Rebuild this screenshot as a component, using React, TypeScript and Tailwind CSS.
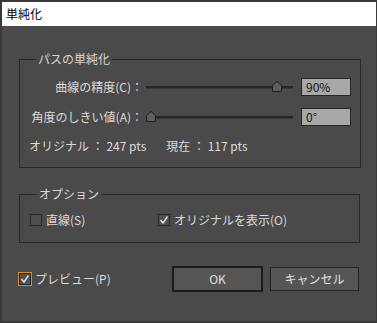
import React from "react";

const FONT = { fontFamily: '"Noto Sans CJK JP", "Noto Sans", sans-serif' };

function Thumb() {
  return (
    <svg width="10" height="11" viewBox="0 0 10 11" className="block">
      <polygon points="0.5,4.5 5,0.5 9.5,4.5 9.5,10.5 0.5,10.5" fill="#5e5e5e" stroke="#1f1f1f" strokeWidth="1" />
    </svg>
  );
}

function Slider({ pos }: { pos: number }) {
  return (
    <div className="relative h-[18px] flex items-center">
      <div className="w-full h-[3px] bg-[#262626] border-b border-[#3a3a3a]" />
      <div className="absolute top-[3px]" style={{ left: pos }}>
        <Thumb />
      </div>
    </div>
  );
}

function Check({ checked, orange }: { checked?: boolean; orange?: boolean }) {
  return (
    <div
      className={
        orange
          ? "w-[14px] h-[14px] border border-[#e38a2c] flex items-center justify-center"
          : "w-[12px] h-[12px] border border-[#262626] bg-[#505050] flex items-center justify-center"
      }
    >
      {orange ? (
        <div className="w-[12px] h-[12px] border border-[#262626] bg-[#505050] flex items-center justify-center">
          <svg width="10" height="10" viewBox="0 0 10 10">
            <polyline points="1.5,5 4,8 8.5,1.5" fill="none" stroke="#e6e6e6" strokeWidth="1.4" />
          </svg>
        </div>
      ) : checked ? (
        <svg width="10" height="10" viewBox="0 0 10 10">
          <polyline points="1.5,5 4,8 8.5,1.5" fill="none" stroke="#e6e6e6" strokeWidth="1.4" />
        </svg>
      ) : null}
    </div>
  );
}

export default function App() {
  return (
    <div
      className="w-[377px] h-[323px] bg-[#3a3a3a] pt-[2px] pl-[2px] pr-[1px] pb-[2px] flex flex-col text-[12px] text-[#dadada]"
      style={FONT}
    >
      <div className="h-[24px] bg-white flex items-center pl-[4px] text-black text-[12px] leading-[16px]">単純化</div>
      <div className="flex-1 bg-[#4a4a4a] pl-[17px] pr-[16px] pt-[25px] flex flex-col">
        <fieldset className="border border-[#2a2a2a] pl-[9px] pr-[9px] pt-[11px] pb-[13px]">
          <legend className="ml-[7px] px-[2px] leading-[16px] text-[12px]">パスの単純化</legend>
          <div className="grid grid-cols-[117px_147px_58px] gap-y-[12px] items-center">
            <div className="text-right leading-[16px] whitespace-nowrap pr-[3px]">曲線の精度(C)：</div>
            <Slider pos={126} />
            <div className="ml-[8px] w-[50px] h-[18px] bg-[#a8a8a8] border border-[#262626] text-[#111] pl-[4px] leading-[16px] text-[12px]">90%</div>
            <div className="text-right leading-[16px] whitespace-nowrap pr-[3px]">角度のしきい値(A)：</div>
            <Slider pos={0} />
            <div className="ml-[8px] w-[50px] h-[18px] bg-[#a8a8a8] border border-[#262626] text-[#111] pl-[4px] leading-[16px] text-[12px]">0°</div>
          </div>
          <div className="flex leading-[16px] mt-[12px] whitespace-pre">
            <span>オリジナル ： 247 pts</span>
            <span className="ml-[20px]">現在 ： 117 pts</span>
          </div>
        </fieldset>
        <fieldset className="mt-[18px] border border-[#2a2a2a] pl-[10px] pt-[10px] pb-[14px]">
          <legend className="ml-[7px] px-[2px] leading-[16px] text-[12px]">オプション</legend>
          <div className="flex items-center">
            <div className="flex items-center gap-[4px] w-[128px]">
              <Check />
              <span className="leading-[16px]">直線(S)</span>
            </div>
            <div className="flex items-center gap-[4px]">
              <Check checked />
              <span className="leading-[16px]">オリジナルを表示(O)</span>
            </div>
          </div>
        </fieldset>
        <div className="flex items-center mt-[23px]">
          <div className="flex items-center gap-[3px] ml-[-1px]">
            <Check orange />
            <span className="leading-[16px]">プレビュー(P)</span>
          </div>
          <div className="ml-auto flex items-center gap-[7px]">
            <button className="w-[91px] h-[26px] border-2 border-[#1c1c1c] bg-[#555555] text-[#e0e0e0] text-[12px] leading-[16px]">OK</button>
            <button className="w-[89px] h-[24px] border border-[#262626] bg-[#555555] text-[#e0e0e0] text-[12px] leading-[16px] mr-[1px]">キャンセル</button>
          </div>
        </div>
      </div>
    </div>
  );
}
